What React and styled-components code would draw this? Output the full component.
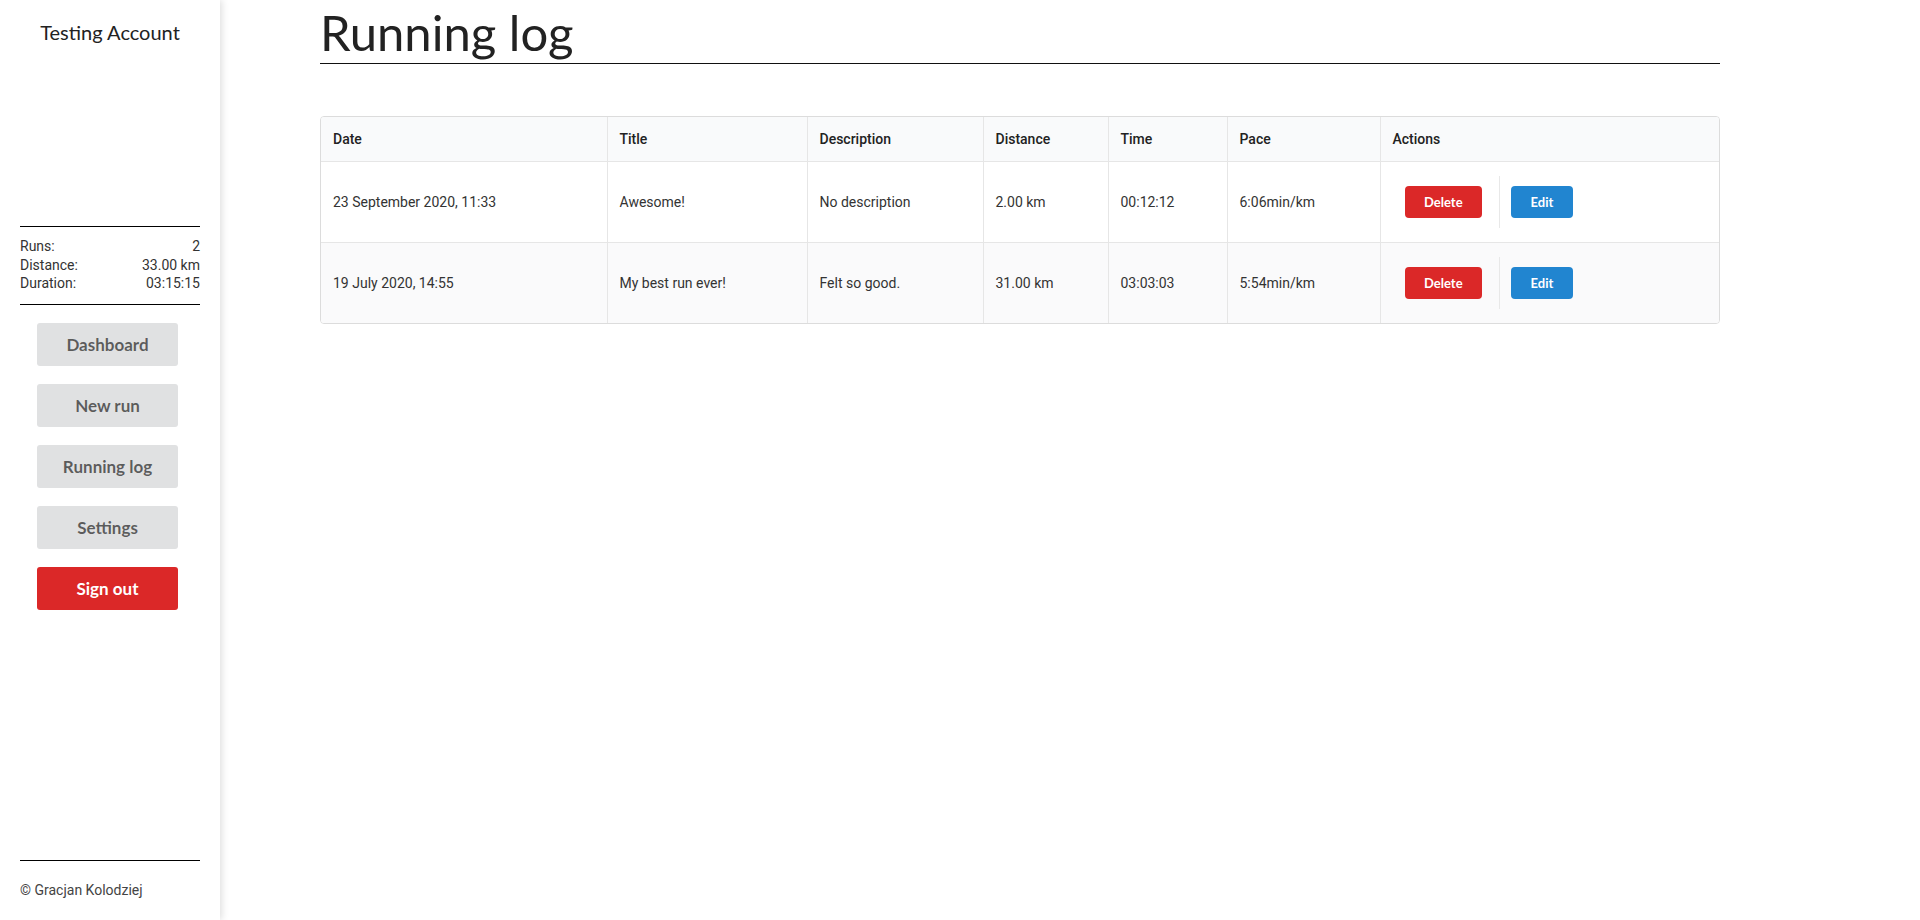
import React from 'react';
import styled, { createGlobalStyle } from 'styled-components';

const GlobalStyle = createGlobalStyle`
  html, body {
    margin: 0;
    padding: 0;
    background: #fff;
    font-family: Roboto, "Liberation Sans", sans-serif;
    color: #212121;
  }
  * {
    box-sizing: border-box;
  }
`;

const Layout = styled.div`
  display: flex;
  height: 100vh;
  overflow: hidden;
`;

const Sidebar = styled.aside`
  width: 220px;
  flex-shrink: 0;
  display: flex;
  flex-direction: column;
  background: #fff;
  box-shadow: 2px 0 7px rgba(0, 0, 0, 0.13);
  position: relative;
  z-index: 1;
`;

const AccountName = styled.div`
  height: 226px;
  padding-top: 20px;
  text-align: center;
  font-family: Lato, "Liberation Sans", sans-serif;
  font-size: 20px;
  line-height: 24px;
  color: #222;
`;

const Stats = styled.div`
  margin: 0 20px;
  padding: 10px 0 11px;
  border-top: 1px solid #000;
  border-bottom: 1px solid #000;
`;

const StatRow = styled.div`
  display: flex;
  justify-content: space-between;
  font-size: 14px;
  line-height: 18.5px;
  color: #333;
`;

const Nav = styled.nav`
  display: flex;
  flex-direction: column;
  align-items: flex-start;
  gap: 18px;
  padding: 18px 0 0 37px;
`;

const NavButton = styled.button`
  width: 141px;
  height: 43px;
  border: none;
  border-radius: 3px;
  background: ${props => (props.$danger ? '#db2828' : '#e0e1e2')};
  color: ${props => (props.$danger ? '#fff' : 'rgba(0, 0, 0, 0.6)')};
  font-family: Lato, "Liberation Sans", sans-serif;
  font-weight: 700;
  font-size: 17px;
  cursor: pointer;
`;

const Footer = styled.footer`
  margin: auto 20px 0;
  padding: 21px 0 22px;
  border-top: 1px solid #000;
  font-size: 14px;
  line-height: 16px;
  color: #444;
`;

const Main = styled.main`
  flex: 1;
  padding-left: 100px;
`;

const Content = styled.div`
  width: 1400px;
`;

const Heading = styled.h1`
  margin: 8px 0 0;
  padding-bottom: 6px;
  font-family: Lato, "Liberation Sans", sans-serif;
  font-weight: 400;
  font-size: 49px;
  line-height: 49px;
  color: #222;
  border-bottom: 1px solid #111;
`;

const TableBox = styled.div`
  margin-top: 52px;
  border: 1px solid #dcdcdc;
  border-radius: 4px;
  overflow: hidden;
`;

const Table = styled.table`
  width: 100%;
  border-collapse: collapse;
  table-layout: fixed;
  font-size: 14px;
`;

const HeadCell = styled.th`
  text-align: left;
  font-weight: 500;
  padding: 12px 12px;
  line-height: 20px;
  background: #f9fafb;
  color: #222;
  border-left: ${props => (props.$first ? 'none' : '1px solid #e6e6e6')};
`;

const BodyRow = styled.tr`
  background: ${props => (props.$striped ? '#fafafb' : '#fff')};
  border-top: 1px solid #e6e6e6;
`;

const Cell = styled.td`
  padding: 14px 12px;
  line-height: 20px;
  vertical-align: middle;
  color: #333;
  border-left: ${props => (props.$first ? 'none' : '1px solid #e6e6e6')};
`;

const ActionCell = styled.td`
  padding: 14px 12px;
  border-left: 1px solid #e6e6e6;
`;

const Actions = styled.div`
  display: flex;
  align-items: stretch;
`;

const ActionSlot = styled.div`
  display: flex;
  align-items: center;
  padding: 10px ${props => (props.$divided ? '0' : '17px')} 10px ${props => (props.$divided ? '11px' : '12px')};
  border-left: ${props => (props.$divided ? '1px solid #e8e8e8' : 'none')};
`;

const SmallButton = styled.button`
  height: 32px;
  padding: 0 19.5px;
  border: none;
  border-radius: 4px;
  background: ${props => props.$color};
  color: #fff;
  font-family: Lato, "Liberation Sans", sans-serif;
  font-weight: 700;
  font-size: 13px;
  cursor: pointer;
`;

const COLUMNS = [
  { label: 'Date', width: 286 },
  { label: 'Title', width: 200 },
  { label: 'Description', width: 176 },
  { label: 'Distance', width: 125 },
  { label: 'Time', width: 119 },
  { label: 'Pace', width: 153 },
  { label: 'Actions' }
];

const RUNS = [
  {
    id: 1,
    date: '23 September 2020, 11:33',
    title: 'Awesome!',
    description: 'No description',
    distance: '2.00 km',
    time: '00:12:12',
    pace: '6:06min/km'
  },
  {
    id: 2,
    date: '19 July 2020, 14:55',
    title: 'My best run ever!',
    description: 'Felt so good.',
    distance: '31.00 km',
    time: '03:03:03',
    pace: '5:54min/km'
  }
];

const NAV_ITEMS = ['Dashboard', 'New run', 'Running log', 'Settings'];

const App = () => (
  <>
    <GlobalStyle />
    <Layout>
      <Sidebar>
        <AccountName>Testing Account</AccountName>
        <Stats>
          <StatRow><span>Runs:</span><span>2</span></StatRow>
          <StatRow><span>Distance:</span><span>33.00 km</span></StatRow>
          <StatRow><span>Duration:</span><span>03:15:15</span></StatRow>
        </Stats>
        <Nav>
          {NAV_ITEMS.map(item => (
            <NavButton key={item}>{item}</NavButton>
          ))}
          <NavButton $danger>Sign out</NavButton>
        </Nav>
        <Footer>© Gracjan Kolodziej</Footer>
      </Sidebar>

      <Main>
        <Content>
          <Heading>Running log</Heading>
          <TableBox>
            <Table>
              <colgroup>
                {COLUMNS.map(col => (
                  <col key={col.label} style={col.width ? { width: col.width } : undefined} />
                ))}
              </colgroup>
              <thead>
                <tr>
                  {COLUMNS.map((col, i) => (
                    <HeadCell key={col.label} $first={i === 0}>{col.label}</HeadCell>
                  ))}
                </tr>
              </thead>
              <tbody>
                {RUNS.map((run, i) => (
                  <BodyRow key={run.id} $striped={i % 2 === 1}>
                    <Cell $first>{run.date}</Cell>
                    <Cell>{run.title}</Cell>
                    <Cell>{run.description}</Cell>
                    <Cell>{run.distance}</Cell>
                    <Cell>{run.time}</Cell>
                    <Cell>{run.pace}</Cell>
                    <ActionCell>
                      <Actions>
                        <ActionSlot>
                          <SmallButton $color="#db2828">Delete</SmallButton>
                        </ActionSlot>
                        <ActionSlot $divided>
                          <SmallButton $color="#2185d0">Edit</SmallButton>
                        </ActionSlot>
                      </Actions>
                    </ActionCell>
                  </BodyRow>
                ))}
              </tbody>
            </Table>
          </TableBox>
        </Content>
      </Main>
    </Layout>
  </>
);

export default App;
